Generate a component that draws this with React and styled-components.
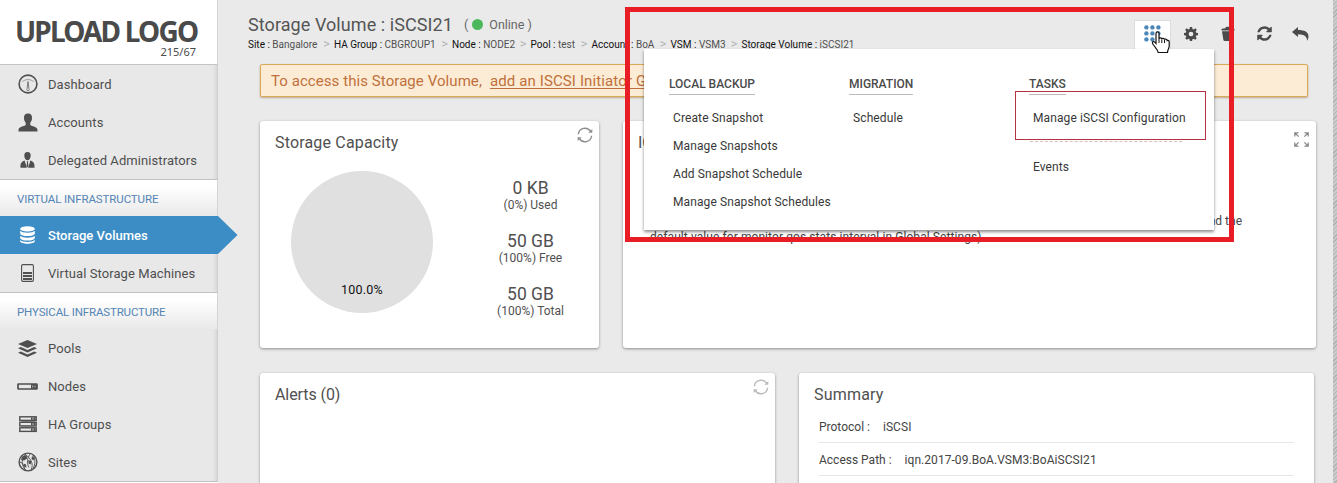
import React from "react";
import styled, { createGlobalStyle } from "styled-components";

const Global = createGlobalStyle`
  * { box-sizing: border-box; }
  html, body { margin: 0; padding: 0; overflow: hidden; }
  body { font-family: Roboto, "Liberation Sans", sans-serif; color: #444; background: #eaeaea; }
  svg { display: block; flex: none; }
`;

const Page = styled.div`
  position: relative;
  display: flex;
  width: 1337px;
  height: 483px;
  overflow: hidden;
  background: #eaeaea;
`;

const Txt = styled.span`
  letter-spacing: ${(p) => p.$ls || 0}px;
  white-space: nowrap;
`;

/* ---------- sidebar ---------- */
const Sidebar = styled.nav`
  position: relative;
  z-index: 1;
  flex: none;
  width: 218px;
  height: 483px;
  background: #e8e8e8;
  box-shadow: inset -1px 0 0 #cfcfcf, inset -4px 0 4px -2px rgba(0, 0, 0, 0.1);
`;
const Logo = styled.div`
  height: 65px;
  padding: 13px 21px 0 15px;
  background: #fff;
  border-bottom: 1px solid #c4c4c4;
  border-right: 1px solid #d4d4d4;
  font-family: "Noto Sans", "Open Sans", sans-serif;
  color: #4a4a4a;
`;
const LogoName = styled.div`
  font-size: 28px;
  line-height: 36px;
  height: 33px;
  font-weight: 700;
  letter-spacing: -1.8px;
  white-space: nowrap;
`;
const LogoSize = styled.div`
  font-size: 11px;
  line-height: 12px;
  text-align: right;
`;
const NavItem = styled.div`
  position: relative;
  display: flex;
  align-items: center;
  height: 38px;
  padding-left: 16px;
  gap: 9px;
  font-size: 13px;
  color: ${(p) => (p.$active ? "#fff" : "#4f4f4f")};
  font-weight: ${(p) => (p.$active ? 500 : 400)};
  background: ${(p) => (p.$active ? "#3c8dc5" : "transparent")};
`;
const IconCell = styled.span`
  display: flex;
  justify-content: center;
  align-items: center;
  width: 23px;
  height: 24px;
`;
const Arrow = styled.svg`
  position: absolute;
  left: 218px;
  top: 0;
`;
const NavHeading = styled.div`
  height: 37px;
  padding: 2px 0 0 17px;
  line-height: 34px;
  border-top: 1px solid #c2c2c2;
  border-right: 1px solid #d4d4d4;
  background: linear-gradient(#fff 20%, #e9e9e9);
  font-size: 11.5px;
  color: #5585b5;
`;
const NavEnd = styled.div`
  height: 2px;
  border-top: 1px solid #c2c2c2;
  background: #fff;
`;

/* ---------- main ---------- */
const Main = styled.main`
  flex: 1;
  min-width: 0;
  padding: 0 17px 0 42px;
`;
const Header = styled.header`
  display: flex;
  justify-content: space-between;
  height: 64px;
  margin: 0 -3px 0 -12px;
`;
const TitleRow = styled.div`
  display: flex;
  align-items: center;
  height: 26px;
  margin-top: 11px;
  white-space: nowrap;
`;
const Title = styled.h1`
  margin: 0;
  width: 216px;
  font-size: 18px;
  font-weight: 400;
  color: #555;
`;
const Status = styled.span`
  display: flex;
  align-items: center;
  font-size: 12.5px;
  color: #666;
`;
const Dot = styled.i`
  width: 11px;
  height: 11px;
  border-radius: 50%;
  background: #4cb85c;
  margin: 0 6px 0 4px;
`;
const Crumbs = styled.div`
  display: flex;
  align-items: center;
  height: 14px;
  font-size: 10px;
  color: #505050;
  white-space: nowrap;
`;
const Crumb = styled.span`
  display: flex;
  align-items: center;
  justify-content: space-between;
  width: ${(p) => p.$w}px;
  b { font-weight: 400; color: #111; }
  i { font-style: normal; color: #b5b5b5; font-size: 13px; line-height: 10px; margin-right: 4px; }
`;
const Tools = styled.div`
  display: flex;
  height: 29px;
  margin-top: 20px;
  color: #4a4a4a;
`;
const Tool = styled.span`
  display: flex;
  align-items: center;
  justify-content: center;
  width: 36.5px;
  height: 27px;
`;
const TabTool = styled(Tool)`
  width: 37px;
  height: 30px;
  margin-right: 2px;
  padding-bottom: 5px;
  background: #fff;
  border: 1px solid #dcdcdc;
  border-bottom: 0;
`;
const Notice = styled.div`
  display: flex;
  align-items: center;
  height: 33px;
  width: 1048px;
  padding: 0 0 0 10px;
  border: 1px solid #dba95a;
  border-radius: 2px;
  background: #fcecd5;
  box-shadow: 0 1px 2px rgba(120, 90, 30, 0.45);
  font-size: 15px;
  color: #c0703c;
  white-space: nowrap;
  u { margin-left: 8px; text-underline-offset: 2px; text-decoration-thickness: 1px; }
`;
const Row = styled.div`
  display: flex;
  gap: 24px;
  margin-top: ${(p) => p.$top}px;
`;
const Card = styled.section`
  position: relative;
  flex: none;
  width: ${(p) => p.$w}px;
  height: ${(p) => p.$h}px;
  padding: 10px 20px 0 15px;
  background: #fff;
  border-radius: 3px;
  box-shadow: 0 1px 3px rgba(0, 0, 0, 0.4);
`;
const CardHead = styled.h2`
  margin: 0;
  height: 23px;
  line-height: 23px;
  font-size: 16px;
  font-weight: 400;
  color: #505050;
`;
const Corner = styled.span`
  position: absolute;
  right: ${(p) => p.$r || 6}px;
  top: ${(p) => p.$t || 6}px;
  opacity: ${(p) => p.$o || 1};
`;
const Capacity = styled.div`
  display: flex;
  justify-content: space-between;
  padding: 17px 0 0 16px;
`;
const Pie = styled.div`
  display: flex;
  align-items: flex-end;
  justify-content: center;
  width: 142px;
  height: 142px;
  padding-bottom: 16px;
  border-radius: 50%;
  background: #e0e0e0;
  color: #111;
  font-size: 12.5px;
`;
const Stats = styled.div`
  width: 97px;
  padding-top: 7px;
  text-align: center;
`;
const Stat = styled.div`
  height: 53px;
  font-size: 12px;
  line-height: 15px;
  color: #505050;
  strong { display: block; font-size: 17.5px; line-height: 20px; font-weight: 400; }
`;
const Note = styled.div`
  display: flex;
  flex-direction: column;
  width: 604px;
  padding: 59px 0 0 12px;
  font-size: 12px;
  line-height: 16px;
  color: #444;
  span:first-child { align-self: flex-end; }
`;
const Fields = styled.div`
  padding: 4px 0 0 5px;
`;
const Field = styled.div`
  display: flex;
  gap: 13px;
  height: 33px;
  padding-top: 10px;
  border-bottom: 1px solid #e6e6e6;
  font-size: 12px;
  line-height: 14px;
  color: #444;
`;
const Stripe = styled.div`
  flex: none;
  width: 4px;
  background: repeating-linear-gradient(135deg, #b2b2b2 0 1px, #cbcbcb 1px 3px);
`;

/* ---------- overlays ---------- */
const Menu = styled.div`
  position: absolute;
  z-index: 2;
  left: 644px;
  top: 49px;
  width: 570px;
  height: 181px;
  padding: 26px 0 0 25px;
  display: grid;
  grid-template-columns: 180px 180px 1fr;
  background: #fff;
  box-shadow: 0 2px 3px rgba(0, 0, 0, 0.45);
`;
const MenuHead = styled.div`
  width: fit-content;
  height: 20px;
  line-height: 18px;
  border-bottom: 1px solid #bbb;
  font-size: 12px;
  font-weight: 500;
  color: #4a4a4a;
`;
const MenuItem = styled.div`
  height: 28px;
  line-height: 28px;
  padding-left: 4px;
  font-size: 12px;
  letter-spacing: 0.11px;
  color: #383838;
  white-space: nowrap;
`;
const Items = styled.div`
  padding-top: 9px;
`;
const Dash = styled.div`
  width: 152px;
  margin: 9px 0 11px 1px;
  border-top: 1px dashed #d9bfc3;
`;
const Mark = styled.div`
  position: absolute;
  z-index: 3;
  left: ${(p) => p.$x}px;
  top: ${(p) => p.$y}px;
  width: ${(p) => p.$w}px;
  height: ${(p) => p.$h}px;
  border: ${(p) => p.$b}px solid ${(p) => p.$c};
`;
const Cursor = styled.svg`
  position: absolute;
  z-index: 4;
  left: 1151px;
  top: 31px;
`;

/* ---------- icons ---------- */
const Gauge = () => (
  <svg width="20" height="20" viewBox="0 0 20 20" fill="none" stroke="currentColor">
    <circle cx="10" cy="10" r="8.9" strokeWidth="1.6" />
    <path d="M4.2 7.6Q10 3.4 15.8 7.6" strokeWidth=".8" opacity=".6" />
    <path d="M10 7.500 9.100 14.500a1.100 1.500 0 1 0 1.800 0z" strokeWidth=".7" />
  </svg>
);
const Person = () => (
  <svg width="20" height="19" viewBox="0 0 20 19" fill="currentColor">
    <path d="M10 .5c3 0 4.2 1.800 4 4.500 0 2.200-.8 3.700-1.700 4.700v2.300c1.500 1.400 7.200 1.500 7.200 5v1.500H.5V17c0-3.500 5.700-3.600 7.200-5V9.700C6.800 8.700 6 7.200 6 5 5.800 2.300 7 .5 10 .5z" />
  </svg>
);
const Admin = () => (
  <svg width="15" height="16" viewBox="0 0 15 16" fill="currentColor">
    <path d="M7.500 0c2.400 0 3.300 1.600 3.200 3.700C10.600 6 9.300 8.300 7.500 8.300S4.400 6 4.300 3.700C4.200 1.600 5.100 0 7.500 0z" />
    <path d="M4.600 8.500 6.900 15.700H.5C.3 12 .7 10 4.600 8.500zM10.400 8.500 8.100 15.700h6.400c.2-3.700-.2-5.700-4.100-7.200z" />
    <path d="M6.700 9.300h1.600l-.3 1.500.5 3.200-1 1.400-1-1.400.5-3.200z" />
  </svg>
);
const Database = () => (
  <svg width="15" height="18" viewBox="0 0 15 18" fill="currentColor">
    <ellipse cx="7.500" cy="2.900" rx="7.300" ry="2.700" />
    <path d="M.2 4.800c1.600 2.600 13 2.600 14.600 0v2.700c0 3.400-14.600 3.400-14.600 0z" />
    <path d="M.2 9.700c1.600 2.600 13 2.600 14.600 0v2.200c0 3.400-14.600 3.400-14.600 0z" />
    <path d="M.2 14c1.600 2.600 13 2.600 14.600 0v1c0 3.600-14.600 3.600-14.600 0z" />
  </svg>
);
const Machine = () => (
  <svg width="13" height="18" viewBox="0 0 13 18" fill="none" stroke="currentColor">
    <rect x=".6" y=".6" width="11.800" height="16.800" rx="1.300" strokeWidth="1.100" />
    <path d="M2 9h9M2 12h9M2 15h9" strokeWidth="2.100" />
  </svg>
);
const Layers = () => (
  <svg width="19" height="17" viewBox="0 0 19 17" fill="currentColor">
    <path d="M9.500 0 19 4 9.500 8 0 4z" />
    <path d="M0 8.300 2.800 7.100 9.500 10l6.700-2.900L19 8.300l-9.500 4.100z" />
    <path d="M0 12.700l2.800-1.200 6.700 2.900 6.700-2.900 2.800 1.200L9.500 17z" />
  </svg>
);
const NodeIcon = () => (
  <svg width="21" height="7" viewBox="0 0 21 7">
    <rect x="1" y="1" width="19" height="5" rx=".5" fill="none" stroke="currentColor" strokeWidth="1.700" />
    <path d="M14 1h6v5h-6z" fill="currentColor" />
    <path d="M15.700 2.500v2M18 2.700v1.600" stroke="#e8e8e8" strokeWidth=".7" />
  </svg>
);
const Servers = () => (
  <svg width="18" height="17" viewBox="0 0 18 17" fill="none" stroke="currentColor">
    {[0.8, 6.3, 11.8].map((y) => (
      <g key={y}>
        <rect x=".8" y={y} width="16.400" height="3.600" strokeWidth="1.400" />
        <path d={`M12 ${y + 1.8}h4.500`} strokeWidth="2.600" />
        <path d={`M14 ${y + 0.8}v2`} stroke="#e8e8e8" strokeWidth=".8" />
      </g>
    ))}
    <path d="M2.500 5.400h13M2.500 10.900h13" strokeWidth=".8" opacity=".7" />
  </svg>
);
const Globe = () => (
  <svg width="20" height="20" viewBox="0 0 20 20" fill="none" stroke="currentColor">
    <circle cx="10" cy="10" r="8.900" strokeWidth="1.400" />
    <path d="M8.500 1.300C2.500 6 3 14 8.500 18.700M6.500 2C13 6 16 12 13 18M12.500 1.500C9 6 8.500 11 11 15.500M15 3c2.500 4 2.500 9 0 13.500M1.500 10c3 .5 4.500 3 5 7" strokeWidth=".9" />
    <path d="M4 4.500 8.500 3l.8 3.500L6 8.500 3 8zM10.300 8l3 1-.5 3.500-2.300-1zM5.500 11.500l2.500 1 .5 3-2-.5zM14 4l2.500 2-1 2.500L13.500 7z" fill="currentColor" stroke="none" />
  </svg>
);
const Gear = () => (
  <svg width="14" height="14" viewBox="0 0 512 512" fill="currentColor">
    <path fillRule="evenodd" d="M216 0h80l14 70 42 18 60-40 56 56-40 60 17 42 67 13v80l-67 14-17 42 40 59-56 56-60-40-42 18-14 64h-80l-14-64-42-18-59 40-57-56 40-59-17-42-67-14v-80l67-13 17-42-40-60 57-56 59 40 42-18zm40 170a86 86 0 1 0 0 172 86 86 0 0 0 0-172z" />
  </svg>
);
const Trash = () => (
  <svg width="14" height="15" viewBox="0 0 14 15" fill="currentColor">
    <path d="M4.300 2.200C4.500.3 9.500.3 9.700 2.200l3.600.6.3 1.600H.4l.3-1.600z" />
    <path d="M1 5.300h12l-1.300 8.200q-.2 1.500-1.700 1.500H4q-1.500 0-1.700-1.500z" />
  </svg>
);
const Sync = () => (
  <svg width="17" height="17" viewBox="0 0 1792 1792" fill="currentColor">
    <path d="M1639 1056q0 5-1 7-64 268-268 434.500t-478 166.500q-146 0-282.500-55t-243.500-157l-129 129q-19 19-45 19t-45-19-19-45v-448q0-26 19-45t45-19h448q26 0 45 19t19 45-19 45l-137 137q71 66 161 102t187 36q134 0 250-65t186-179q11-17 53-117 8-23 30-23h192q13 0 22.500 9.500t9.500 22.500zm25-800v448q0 26-19 45t-45 19h-448q-26 0-45-19t-19-45 19-45l138-138q-148-137-349-137-134 0-250 65t-186 179q-11 17-53 117-8 23-30 23h-199q-13 0-22.500-9.500t-9.500-22.500v-7q65-268 270-434.500t480-166.500q146 0 284 55.500t245 156.500l130-129q19-19 45-19t45 19 19 45z" />
  </svg>
);
const Reply = () => (
  <svg width="17" height="14" viewBox="0 0 17 14" fill="currentColor">
    <path d="M0 5 6 0v3c6.500 0 10.500 2 10.500 6.500 0 2-.8 3.300-1.500 4.300C15.200 9.500 12.500 7.300 6 7.200V10z" />
  </svg>
);
const Dots = () => (
  <svg width="17" height="17" viewBox="0 0 17 17" fill="#4a86b8">
    {[2.4, 8.4, 14.4].map((y) => [2.4, 8.4, 14.4].map((x) => <circle key={`${x}-${y}`} cx={x} cy={y} r="2.200" />))}
  </svg>
);
const Reload = () => (
  <svg width="16" height="16" viewBox="0 0 16 16" fill="none" stroke="#8d8d8d" strokeWidth="1.400">
    <path d="M1.400 7.200A6.600 6.600 0 0 1 13.600 4.400M14.600 8.800A6.600 6.600 0 0 1 2.400 11.600" />
    <path d="M15.300 2v3.700h-4zM.7 14v-3.700h4z" fill="#8d8d8d" stroke="none" />
  </svg>
);
const Expand = () => (
  <svg width="15" height="15" viewBox="0 0 15 15" fill="none" stroke="#858585" strokeWidth="1.200">
    <path d="M.8 4.500V.8h3.700M1 1l3.600 3.600M10.500.8h3.700v3.700M14 1l-3.600 3.600M.8 10.500v3.700h3.700M1 14l3.600-3.600M10.500 14.200h3.700v-3.700M14 14l-3.600-3.600" />
  </svg>
);

const Nav = ({ icon, active, ls = 0.08, children }) => (
  <NavItem $active={active}>
    <IconCell>{icon}</IconCell>
    <Txt $ls={ls}>{children}</Txt>
    {active && (
      <Arrow width="20" height="38" viewBox="0 0 20 38"><path d="M0 0 19.500 19 0 38z" fill="#3c8dc5" /></Arrow>
    )}
  </NavItem>
);

const crumbs = [
  ["Site", "Bangalore", 86], ["HA Group", "CBGROUP1", 118], ["Node", "NODE2", 78.5],
  ["Pool", "test", 61], ["Account", "BoA", 79], ["VSM", "VSM3", 71], ["Storage Volume", "iSCSI21", 120],
];

export default function App() {
  return (
    <Page>
      <Global />
      <Sidebar>
        <Logo>
          <LogoName>UPLOAD LOGO</LogoName>
          <LogoSize>215/67</LogoSize>
        </Logo>
        <Nav icon={<Gauge />}>Dashboard</Nav>
        <Nav icon={<Person />}>Accounts</Nav>
        <Nav icon={<Admin />}>Delegated Administrators</Nav>
        <NavHeading><Txt $ls={-0.1}>VIRTUAL INFRASTRUCTURE</Txt></NavHeading>
        <Nav icon={<Database />} active ls={0.03}>Storage Volumes</Nav>
        <Nav icon={<Machine />}>Virtual Storage Machines</Nav>
        <NavHeading><Txt $ls={-0.15}>PHYSICAL INFRASTRUCTURE</Txt></NavHeading>
        <Nav icon={<Layers />}>Pools</Nav>
        <Nav icon={<NodeIcon />}>Nodes</Nav>
        <Nav icon={<Servers />}>HA Groups</Nav>
        <Nav icon={<Globe />}>Sites</Nav>
        <NavEnd />
      </Sidebar>
      <Main>
        <Header>
          <div>
            <TitleRow>
              <Title><Txt $ls={0.07}>Storage Volume : iSCSI21</Txt></Title>
              <Status>(<Dot /><Txt>Online</Txt>&nbsp;)</Status>
            </TitleRow>
            <Crumbs>
              {crumbs.map(([k, v, w], n) => (
                <Crumb key={k} $w={w}>
                  <span><b>{k} :</b> {v}</span>
                  {n < crumbs.length - 1 && <i>&gt;</i>}
                </Crumb>
              ))}
            </Crumbs>
          </div>
          <Tools>
            <TabTool><Dots /></TabTool>
            <Tool><Gear /></Tool>
            <Tool><Trash /></Tool>
            <Tool><Sync /></Tool>
            <Tool><Reply /></Tool>
          </Tools>
        </Header>
        <Notice>
          <Txt $ls={0.07}>To access this Storage Volume,</Txt>
          <u><Txt $ls={0.12}>add an ISCSI Initiator Group</Txt></u>
        </Notice>
        <Row $top={24}>
          <Card $w={339} $h={227}>
            <CardHead><Txt $ls={0.17}>Storage Capacity</Txt></CardHead>
            <Corner><Reload /></Corner>
            <Capacity>
              <Pie><Txt $ls={0.2}>100.0%</Txt></Pie>
              <Stats>
                <Stat><strong>0 KB</strong>(0%) Used</Stat>
                <Stat><strong>50 GB</strong>(100%) Free</Stat>
                <Stat><strong>50 GB</strong>(100%) Total</Stat>
              </Stats>
            </Capacity>
          </Card>
          <Card $w={693} $h={227}>
            <CardHead>IOPS</CardHead>
            <Corner $r={7} $t={11}><Expand /></Corner>
            <Note>
              <Txt>and the</Txt>
              <Txt $ls={0.08}>default value for monitor qos stats interval in Global Settings)</Txt>
            </Note>
          </Card>
        </Row>
        <Row $top={25}>
          <Card $w={515} $h={130}>
            <CardHead><Txt $ls={-0.08}>Alerts (0)</Txt></CardHead>
            <Corner $o={0.6}><Reload /></Corner>
          </Card>
          <Card $w={515} $h={130}>
            <CardHead><Txt $ls={0.2}>Summary</Txt></CardHead>
            <Fields>
              <Field><Txt>Protocol :</Txt><Txt $ls={0.05}>iSCSI</Txt></Field>
              <Field><Txt>Access Path :</Txt><Txt $ls={0.05}>iqn.2017-09.BoA.VSM3:BoAiSCSI21</Txt></Field>
            </Fields>
          </Card>
        </Row>
      </Main>
      <Stripe />
      <Menu>
        <div>
          <MenuHead>LOCAL BACKUP</MenuHead>
          <Items>
            <MenuItem>Create Snapshot</MenuItem>
            <MenuItem>Manage Snapshots</MenuItem>
            <MenuItem>Add Snapshot Schedule</MenuItem>
            <MenuItem>Manage Snapshot Schedules</MenuItem>
          </Items>
        </div>
        <div>
          <MenuHead>MIGRATION</MenuHead>
          <Items><MenuItem>Schedule</MenuItem></Items>
        </div>
        <div>
          <MenuHead>TASKS</MenuHead>
          <Items>
            <MenuItem>Manage iSCSI Configuration</MenuItem>
            <Dash />
            <MenuItem>Events</MenuItem>
          </Items>
        </div>
      </Menu>
      <Mark $x={1015} $y={91} $w={191} $h={49} $b={1} $c="#b23442" />
      <Mark $x={625} $y={7} $w={609} $h={235} $b={5} $c="#e81d25" />
      <Cursor width="19" height="23" viewBox="0 0 19 23">
        <path d="M5 2.500C5 .3 8 .3 8 2.500V8c0-1.500 2.800-1.500 2.800.3 0-1.300 2.700-1.300 2.700.5 0-1.200 2.700-1 2.700.8 1-.8 2 .2 2 1.400v4c0 2.500-1.700 3.500-1.700 6.500H7.200c0-2.500-2.700-4.500-5.400-8.500-1.300-2 .6-3.200 2-1.900L5 12.500z" fill="#fff" stroke="#111" strokeWidth="1.200" />
        <path d="M8 8v4M10.800 8.500V12M13.500 9v3" stroke="#111" strokeWidth="1" />
      </Cursor>
    </Page>
  );
}
